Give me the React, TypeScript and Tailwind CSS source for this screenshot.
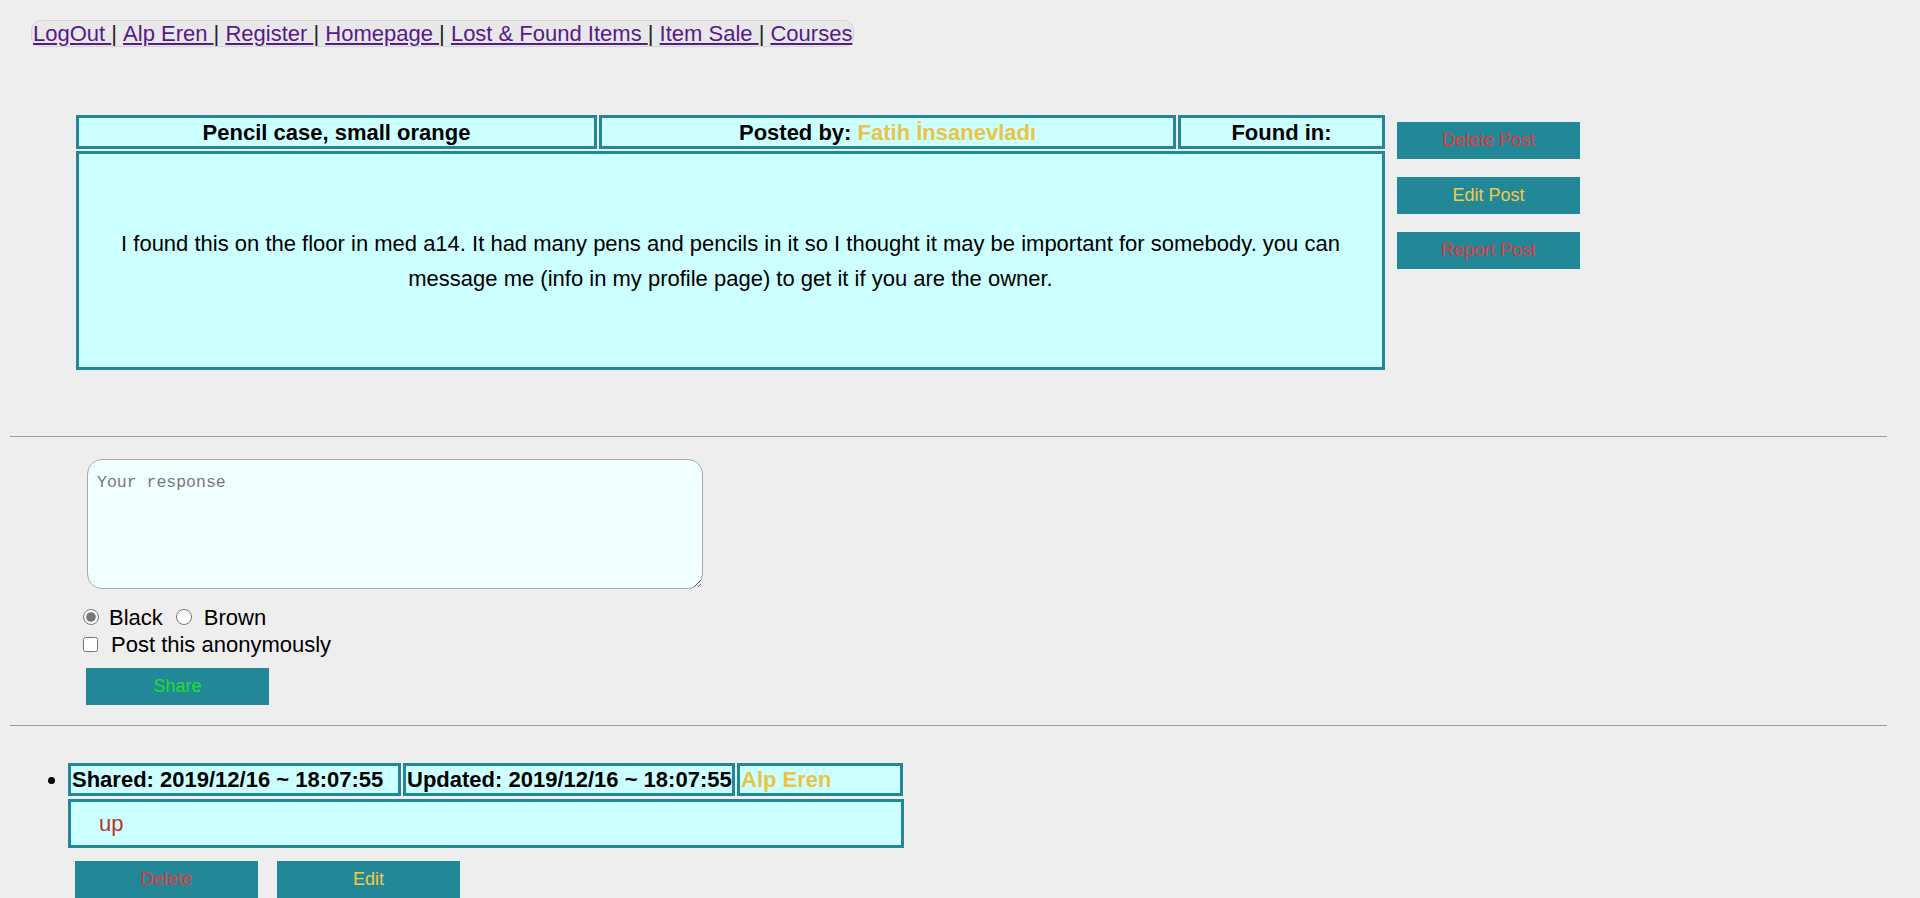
import React from "react";

const links = ["LogOut ", "Alp Eren ", "Register ", "Homepage ", "Lost & Found Items ", "Item Sale ", "Courses"];

const cell = "border-[3px] border-[#228897] bg-[#ccffff]";
const btn = "w-[183px] h-[37px] bg-[#228897] text-[18px] flex items-center justify-center";

export default function App() {
  return (
    <div
      className="h-screen overflow-y-scroll bg-[#eeeeee] text-black"
      style={{ fontFamily: '"Liberation Sans", Arial, sans-serif' }}
    >
      <div className="min-h-[1950px]">
        {/* top nav */}
        <div className="pt-[20px] pl-[31px]">
          <div className="inline-flex items-center h-[27px] px-[1px] border border-[#d2d2d2] rounded-[10px] bg-[#e8e8e8] text-[22px] leading-[25px]">
            {links.map((l, i) => (
              <span key={l} className="whitespace-pre">
                <a href="#" className="text-[#551a8b] underline">
                  {l}
                </a>
                {i < links.length - 1 && <span className="text-[#222]">| </span>}
              </span>
            ))}
          </div>
        </div>

        {/* post */}
        <div className="flex pl-[76px] pt-[67px] gap-[12px]">
          <div className="flex flex-col gap-[2px]">
            <div className="flex gap-[2px] text-[22px] font-bold">
              <div className={`${cell} w-[521px] h-[34px] flex items-center justify-center`}>
                Pencil case, small orange
              </div>
              <div className={`${cell} w-[577px] h-[34px] flex items-center justify-center`}>
                Posted by:&nbsp;<span className="text-[#e8c547]">Fatih İnsanevladı</span>
              </div>
              <div className={`${cell} w-[207px] h-[34px] flex items-center justify-center`}>
                Found in:
              </div>
            </div>
            <div className={`${cell} w-[1309px] h-[219px] flex items-center justify-center px-[10px] text-center text-[22px] leading-[35px]`}>
              I found this on the floor in med a14. It had many pens and pencils in it so I thought it may be important for somebody. you can message me (info in my profile page) to get it if you are the owner.
            </div>
          </div>
          <div className="flex flex-col gap-[18px] pt-[7px]">
            <button className={`${btn} text-[#e0393e]`}>Delete Post</button>
            <button className={`${btn} text-[#f2c94c]`}>Edit Post</button>
            <button className={`${btn} text-[#e0393e]`}>Report Post</button>
          </div>
        </div>

        <hr className="mt-[66px] ml-[10px] mr-[33px] border-0 border-t border-[#9c9c9c]" />

        {/* response form */}
        <div className="pl-[87px] pt-[22px]">
          <textarea
            placeholder="Your response"
            className="block w-[616px] h-[130px] rounded-[15px] border border-[#a9a9a9] bg-[#f0ffff] px-[9px] py-[11px] text-[16.5px] placeholder:text-[#777] resize-y"
            style={{ fontFamily: '"Liberation Mono", "DejaVu Sans Mono", monospace' }}
          />
          <div className="flex items-center h-[24px] mt-[16px] -ml-[4px] text-[22px]">
            <input type="radio" name="c" defaultChecked className="w-[16px] h-[16px] m-0 accent-[#777]" />
            <span className="ml-[10px]">Black</span>
            <input type="radio" name="c" className="w-[16px] h-[16px] m-0 ml-[13px]" />
            <span className="ml-[12px]">Brown</span>
          </div>
          <div className="flex items-center h-[24px] mt-[3px] -ml-[4px] text-[22px]">
            <input type="checkbox" className="w-[15px] h-[15px] m-0" />
            <span className="ml-[13px]">Post this anonymously</span>
          </div>
          <button className={`${btn} mt-[12px] -ml-[1px] text-[#22dd33]`}>Share</button>
        </div>

        <hr className="mt-[20px] ml-[10px] mr-[33px] border-0 border-t border-[#9c9c9c]" />

        {/* comments */}
        <ul className="list-disc pl-[68px] pt-[37px] text-[22px]">
          <li>
            <div className="flex flex-col gap-[3px]">
              <div className="flex gap-[2px] font-bold">
                <div className={`${cell} w-[333px] h-[33px] flex items-center px-[1px] whitespace-nowrap`}>
                  Shared: 2019/12/16 ~ 18:07:55
                </div>
                <div className={`${cell} w-[332px] h-[33px] flex items-center px-[1px] whitespace-nowrap`}>
                  Updated: 2019/12/16 ~ 18:07:55
                </div>
                <div className={`${cell} w-[166px] h-[33px] flex items-center px-[1px] text-[#e8c547]`}>
                  Alp Eren
                </div>
              </div>
              <div className={`${cell} w-[836px] h-[49px] flex items-center pl-[28px] text-[#b5392c]`}>
                up
              </div>
            </div>
            <div className="flex gap-[19px] mt-[13px] ml-[7px]">
              <button className={`${btn} text-[#e0393e]`}>Delete</button>
              <button className={`${btn} text-[#f2c94c]`}>Edit</button>
            </div>
          </li>
        </ul>
      </div>
    </div>
  );
}
